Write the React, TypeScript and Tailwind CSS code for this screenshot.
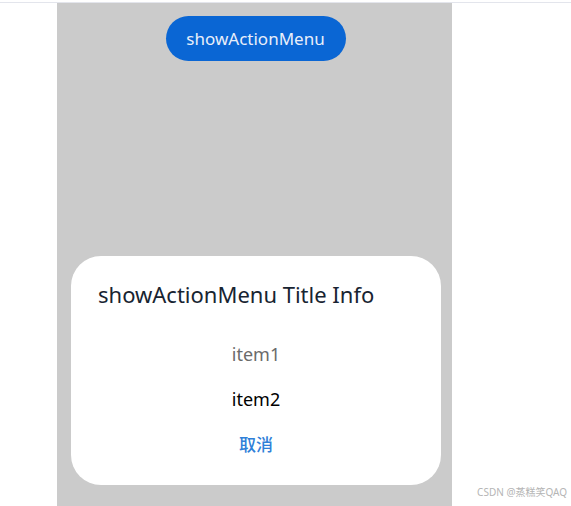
export default function App() {
  return (
    <div
      className="relative h-[506px] w-[571px] overflow-hidden bg-white"
      style={{ fontFamily: '"Noto Sans", "Noto Sans CJK SC", sans-serif' }}
    >
      <div className="h-[3px] border-b border-[#e3e5ec]" />
      <div className="ml-[57px] flex h-[503px] w-[395px] flex-col bg-[#cbcbcb]">
        <div className="flex justify-center pt-[13px] pl-[2px]">
          <button className="flex h-[45px] w-[180px] items-center justify-center rounded-full bg-[#0a66d4] text-[17px] text-[#e8eefa]">
            showActionMenu
          </button>
        </div>

        <div className="mt-[195px] ml-[14px] flex h-[229px] w-[370px] flex-col rounded-[30px] bg-white">
          <div className="pt-[23px] pl-[27px] text-[22px] leading-[30px] text-[#182431]">
            showActionMenu Title Info
          </div>
          <div className="mt-[33px] flex flex-col items-center">
            <div className="text-[18px] leading-[25px] text-[#6b6b6b]">item1</div>
            <div className="mt-[20px] text-[18px] leading-[25px] text-black">item2</div>
            <div className="mt-[20px] text-[17px] leading-[25px] font-medium text-[#2f80d8]">取消</div>
          </div>
        </div>
      </div>
      <div className="absolute right-[4px] bottom-[6px] text-[10px] text-[#b5b5b5]">
        CSDN @蒸糕笑QAQ
      </div>
    </div>
  );
}
